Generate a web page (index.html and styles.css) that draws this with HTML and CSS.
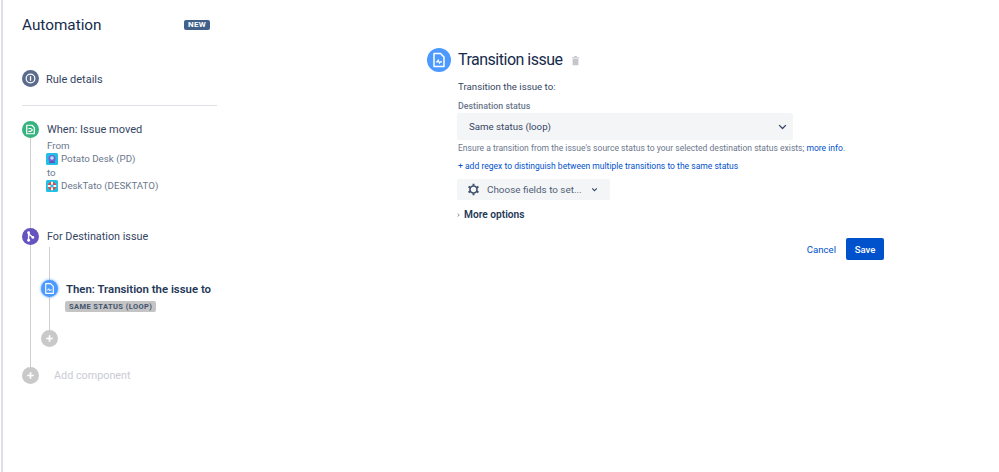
FILE: index.html
```html
<!DOCTYPE html>
<html lang="en">
<head>
<meta charset="utf-8">
<title>Automation</title>
<link rel="stylesheet" href="styles.css">
</head>
<body>
<div class="page">
  <aside class="sidebar">
    <header class="side-head">
      <h1 class="side-title">Automation</h1>
      <span class="new-badge">NEW</span>
    </header>
    <div class="rule-row">
      <span class="dot dot-slate">
        <svg viewBox="0 0 18 18" class="ico"><circle cx="9" cy="9" r="4.6" fill="none" stroke="#fff" stroke-width="1.3"/><rect x="8.3" y="6.6" width="1.4" height="4.8" fill="#fff"/></svg>
      </span>
      <span class="rule-label">Rule details</span>
    </div>
    <hr class="divider">
    <div class="timeline">
      <span class="line line-outer"></span>
      <div class="step step-when">
        <span class="dot dot-green">
          <svg viewBox="0 0 18 18" class="ico"><path d="M5 4.500h5.500l2.500 2.500v6.500h-8z" fill="none" stroke="#fff" stroke-width="1.300" stroke-linejoin="round"/><path d="M6.800 8h2.500l1.700 1.500-1.700 1.500H6.800" fill="none" stroke="#fff" stroke-width="1.100"/></svg>
        </span>
        <div class="step-body">
          <div class="step-title">When: Issue moved</div>
          <div class="meta meta-first">From</div>
          <div class="meta">
            <svg viewBox="0 0 12 12" class="proj"><rect width="12" height="12" rx="1.500" fill="#1fc0e8"/><circle cx="6" cy="5.500" r="3.600" fill="#7a5fd0"/><circle cx="6" cy="5" r="1.800" fill="#bfe3f7"/><rect x="3" y="8.500" width="6" height="1.500" rx=".7" fill="#5e4db2"/></svg>
            <span>Potato Desk (PD)</span>
          </div>
          <div class="meta">to</div>
          <div class="meta">
            <svg viewBox="0 0 12 12" class="proj"><rect width="12" height="12" rx="1.500" fill="#1fc0e8"/><circle cx="6" cy="6" r="4.200" fill="#e5493a"/><path d="M6 1.800v8.400M1.800 6h8.400" stroke="#fff" stroke-width="2"/><circle cx="6" cy="6" r="1.700" fill="#1fc0e8"/></svg>
            <span>DeskTato (DESKTATO)</span>
          </div>
        </div>
      </div>
      <div class="step step-for">
        <span class="dot dot-purple">
          <svg viewBox="0 0 18 18" class="ico"><path d="M7 5v9M7 6l4 3.500" fill="none" stroke="#fff" stroke-width="1.500"/><circle cx="7" cy="5" r="1.500" fill="#fff"/><circle cx="7" cy="13" r="1.500" fill="#fff"/><circle cx="11.500" cy="10" r="1.500" fill="#fff"/></svg>
        </span>
        <div class="step-title step-title-for">For Destination issue</div>
      </div>
      <div class="branch">
        <span class="line line-inner"></span>
        <div class="step step-then">
          <span class="dot dot-blue">
            <svg viewBox="0 0 18 18" class="ico"><path d="M5 3.800h5l3 3v7.400H5z" fill="none" stroke="#fff" stroke-width="1.200" stroke-linejoin="round"/><path d="M6.500 10.500h1l.8-1.300.9 2.300.7-1h1.500" fill="none" stroke="#fff" stroke-width="1"/></svg>
          </span>
          <div class="step-body">
            <div class="step-title step-strong">Then: Transition the issue to</div>
            <span class="status-tag">SAME STATUS (LOOP)</span>
          </div>
        </div>
        <div class="step step-plus">
          <span class="dot dot-grey">
            <svg viewBox="0 0 18 18" class="ico"><path d="M9 5.500v7M5.500 9h7" stroke="#fff" stroke-width="1.800"/></svg>
          </span>
        </div>
      </div>
      <div class="step step-add">
        <span class="dot dot-grey">
          <svg viewBox="0 0 18 18" class="ico"><path d="M9 5.500v7M5.500 9h7" stroke="#fff" stroke-width="1.800"/></svg>
        </span>
        <span class="add-label">Add component</span>
      </div>
    </div>
  </aside>

  <main class="editor">
    <div class="editor-head">
      <span class="head-icon">
        <svg viewBox="0 0 24 24" class="head-svg"><path d="M7 5.500h6.500l3.500 3.500v9.500H7z" fill="none" stroke="#fff" stroke-width="1.500" stroke-linejoin="round"/><path d="M9 13.800h1.300l.9-1.700 1.200 3 .9-1.300h1.700" fill="none" stroke="#fff" stroke-width="1.200"/></svg>
      </span>
      <h2 class="editor-title">Transition issue</h2>
      <svg viewBox="0 0 10 12" class="trash"><path d="M1 2.500h8v1H1zM3.500 1h3v1h-3zM1.800 4h6.400v7.200H1.800z" fill="#c4c6cc"/></svg>
    </div>
    <div class="form">
      <p class="prompt">Transition the issue to:</p>
      <div class="field-label">Destination status</div>
      <div class="select">
        <span>Same status (loop)</span>
        <svg viewBox="0 0 12 8" class="chev"><path d="M1.500 1.500 6 6l4.500-4.500" fill="none" stroke="#344563" stroke-width="1.700"/></svg>
      </div>
      <p class="help">Ensure a transition from the issue's source status to your selected destination status exists; <a class="link">more info</a>.</p>
      <p class="regex"><a class="link">+ add regex to distinguish between multiple transitions to the same status</a></p>
      <div class="fields-btn">
        <svg viewBox="0 0 16 16" class="gear"><circle cx="8" cy="8" r="4.300" fill="none" stroke="#42526e" stroke-width="2"/><path d="M8 1v2.500M8 12.500V15M1.900 4.500l2.200 1.300M11.900 10.200l2.200 1.300M1.900 11.500l2.200-1.300M11.900 5.800l2.200-1.300" stroke="#42526e" stroke-width="2.400"/></svg>
        <span>Choose fields to set...</span>
        <svg viewBox="0 0 12 8" class="chev-small"><path d="M2 2 6 6l4-4" fill="none" stroke="#344563" stroke-width="1.800"/></svg>
      </div>
      <div class="more">
        <svg viewBox="0 0 6 8" class="more-arrow"><path d="M1.500 1 4.500 4l-3 3" fill="none" stroke="#344563" stroke-width="1.200"/></svg>
        <span>More options</span>
      </div>
      <div class="actions">
        <a class="cancel">Cancel</a>
        <button class="save" type="button">Save</button>
      </div>
    </div>
  </main>
</div>
</body>
</html>
```
FILE: styles.css
```css
* { box-sizing: border-box; }
html, body { margin: 0; height: 100%; background: #fff; overflow: hidden; }
body { font-family: Roboto, "Liberation Sans", sans-serif; color: #172b4d; }
.page { display: flex; height: 472px; width: 999px; }

.sidebar { width: 218px; margin-left: 1px; border-left: 2px solid #dfe1e6; padding: 0 0 0 19px; flex: none; }
.side-head { display: flex; align-items: center; justify-content: space-between; height: 20px; margin-top: 15px; padding-right: 9px; }
.side-title { margin: 0; font-size: 15.300px; font-weight: 400; line-height: 20px; color: #172b4d; }
.new-badge { background: #42618a; color: #fff; font-size: 8px; font-weight: 700; line-height: 10px; padding: 0 4px; border-radius: 2px; letter-spacing: .3px; }

.dot { width: 17px; height: 17px; border-radius: 50%; flex: none; display: flex; position: relative; z-index: 1; }
.ico { width: 17px; height: 17px; display: block; }
.dot-slate { background: #5a6b8c; }
.dot-green { background: #36b37e; }
.dot-purple { background: #6554c0; }
.dot-blue { background: #4c9aff; box-shadow: 0 0 3px #4c9aff; }
.dot-grey { background: #c9c9c9; }

.rule-row { display: flex; align-items: center; gap: 7px; margin-top: 35px; height: 17px; }
.rule-label { font-size: 11px; color: #344563; padding-top: 1px; }
.divider { border: 0; border-top: 1px solid #dfe1e6; margin: 18px 0 0; height: 0; width: 195px; }

.timeline { position: relative; margin-top: 15px; }
.line { position: absolute; width: 1px; background: #cfcfcf; }
.line-outer { left: 8px; top: 14px; height: 235px; }
.line-inner { left: 8px; top: 0; height: 84px; }

.step { display: flex; position: relative; }
.step-when { gap: 8px; height: 107px; }
.step-title { font-size: 11px; line-height: 17px; color: #344563; white-space: nowrap; }
.step-title-for { font-size: 10.800px; }
.step-strong { font-size: 11.400px; font-weight: 600; color: #253858; margin-top: 1px; }
.meta { font-size: 9.750px; line-height: 13.300px; color: #6b778c; display: flex; align-items: center; gap: 2px; }
.meta-first { margin-top: 1px; }
.proj { width: 12px; height: 12px; flex: none; margin-left: -1px; margin-right: 1px; }
.step-for { gap: 8px; height: 17px; }

.branch { position: relative; margin-left: 19px; padding-top: 35px; }
.branch .line-inner { top: 2px; }
.step-then { gap: 8px; }
.status-tag { display: block; width: fit-content; margin: 3px 0 0 -1px; background: #c4c4c4; color: #42526e; font-size: 7.500px; font-weight: 700; line-height: 11px; padding: 0 4px; border-radius: 2px; letter-spacing: .4px; }
.step-plus { margin-top: 18px; }
.step-add { align-items: center; gap: 15px; margin-top: 20px; }
.add-label { font-size: 10.800px; color: #c9ccd3; }

.editor { flex: 1; padding: 47px 0 0 208px; }
.editor-head { display: flex; align-items: center; height: 26px; }
.head-icon { width: 24px; height: 24px; border-radius: 50%; background: #4c9aff; flex: none; display: flex; }
.head-svg { width: 24px; height: 24px; display: block; }
.editor-title { margin: 0 0 0 7px; font-size: 16px; font-weight: 400; line-height: 24px; letter-spacing: -.5px; color: #172b4d; }
.trash { width: 9px; height: 11px; margin-left: 8px; }

.form { margin-left: 30px; width: 427px; }
.prompt { margin: 7px 0 0 1px; font-size: 9.700px; line-height: 14px; color: #344563; }
.field-label { margin: 6px 0 0 1px; font-size: 8.900px; font-weight: 500; line-height: 12px; color: #6b778c; }
.select { display: flex; align-items: center; justify-content: space-between; width: 336px; height: 27px; margin-top: 1px; padding: 0 6px 0 12px; background: #f4f5f7; border-radius: 2px; font-size: 9.700px; color: #344563; }
.chev { width: 9px; height: 6px; }
.help { margin: 2px 0 0 1px; font-size: 8.550px; line-height: 12px; color: #6b778c; white-space: nowrap; }
.link { color: #0052cc; }
.regex { margin: 6px 0 0 1px; font-size: 8.550px; line-height: 12px; white-space: nowrap; }
.fields-btn { display: flex; align-items: center; width: 153px; height: 21px; margin-top: 7px; padding-left: 10px; background: #f4f5f7; border-radius: 2px; font-size: 9.900px; color: #505f79; }
.gear { width: 13px; height: 13px; flex: none; margin-right: 7px; }
.chev-small { width: 7px; height: 5px; margin-left: 9px; }
.more { display: flex; align-items: center; gap: 4px; margin-top: 8px; font-size: 10.200px; font-weight: 600; line-height: 14px; color: #253858; }
.more-arrow { width: 3px; height: 6px; }
.actions { display: flex; align-items: center; justify-content: flex-end; gap: 10px; margin-top: 16px; }
.cancel { font-size: 9.600px; color: #0052cc; }
.save { width: 38px; height: 22px; border: 0; padding: 0; border-radius: 2px; background: #0052cc; color: #fff; font: 500 9.600px Roboto, "Liberation Sans", sans-serif; }
```
